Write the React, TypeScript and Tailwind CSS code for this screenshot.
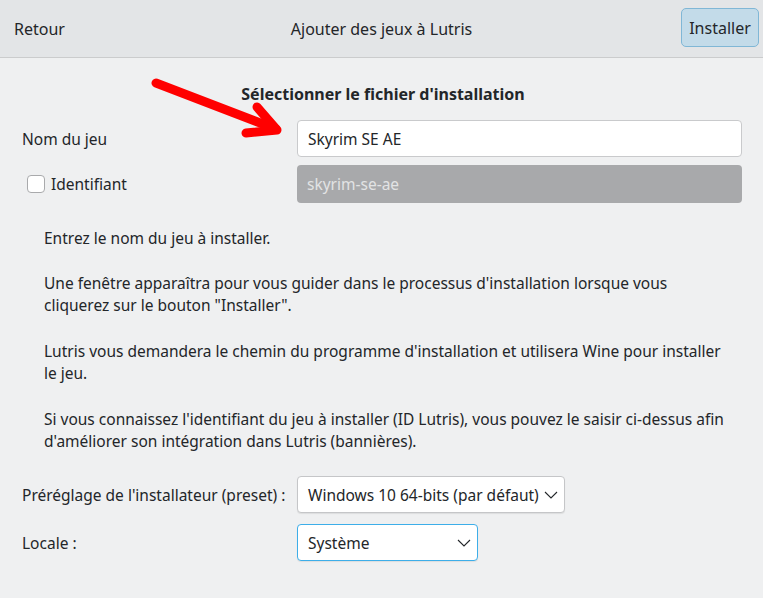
import React from "react";

const font = { fontFamily: '"Noto Sans", "Open Sans", sans-serif' };

function Chevron() {
  return (
    <svg aria-hidden="true" width="14" height="8" viewBox="0 0 14 8" fill="none">
      <path d="M1 1l6 6 6-6" stroke="#232629" strokeWidth="1.1" />
    </svg>
  );
}

function Select({ value, width, focused }: { value: string; width: string; focused?: boolean }) {
  return (
    <div
      className={`flex h-[37px] items-center justify-between rounded-[4px] border bg-white pl-[10px] pr-[6px] shadow-[0_1px_1px_rgba(0,0,0,0.08)] ${width} ${
        focused ? "border-[#3daee9]" : "border-[#c5c6c8]"
      }`}
    >
      <span className="whitespace-nowrap">{value}</span>
      <Chevron />
    </div>
  );
}

export default function App() {
  return (
    <div
      className="relative h-[598px] w-[763px] overflow-hidden bg-[#eff0f1] text-[15.5px] leading-[22px] text-[#232629]"
      style={font}
    >
      <header className="relative flex h-[58px] items-center justify-between border-b border-[#cbcccd] bg-[#e3e5e7] pl-[14px] pr-[4px] text-[16px]">
        <span>Retour</span>
        <span className="absolute left-0 right-0 text-center">Ajouter des jeux à Lutris</span>
        <button className="relative mb-[2px] h-[39px] w-[78px] rounded-[5px] border border-[#80b7d6] bg-[#c3dbe9] text-[#232629]">
          Installer
        </button>
      </header>

      <main className="pl-[22px] pr-[21px] pt-[26px]">
        <h2 className="pl-[2px] text-center text-[16px] leading-[20px] font-bold">
          Sélectionner le fichier d'installation
        </h2>

        <div className="mt-[16px] grid grid-cols-[275px_1fr] items-center gap-y-[8px]">
          <label>Nom du jeu</label>
          <div className="flex h-[37px] items-center rounded-[4px] border border-[#c9cacc] bg-white px-[10px]">
            Skyrim SE AE
          </div>

          <label className="flex items-center gap-[6px] pl-[5px]">
            <span className="h-[18px] w-[18px] rounded-[4px] border border-[#a9aaac] bg-white" />
            Identifiant
          </label>
          <div className="flex h-[38px] items-center rounded-[4px] bg-[#a8a9ab] px-[10px] text-[#e2e3e4]">
            skyrim-se-ae
          </div>
        </div>

        <div className="mt-[24px] pl-[22px]">
          <p>Entrez le nom du jeu à installer.</p>
          <p className="mt-[23px]">
            Une fenêtre apparaîtra pour vous guider dans le processus d'installation lorsque vous
            <br />
            cliquerez sur le bouton "Installer".
          </p>
          <p className="mt-[24px]">
            Lutris vous demandera le chemin du programme d'installation et utilisera Wine pour installer
            <br />
            le jeu.
          </p>
          <p className="mt-[24px]">
            Si vous connaissez l'identifiant du jeu à installer (ID Lutris), vous pouvez le saisir ci-dessus afin
            <br />
            d'améliorer son intégration dans Lutris (bannières).
          </p>
        </div>

        <div className="mt-[24px] grid grid-cols-[275px_1fr] items-center gap-y-[11px]">
          <label>Préréglage de l'installateur (preset) :</label>
          <Select value="Windows 10 64-bits (par défaut)" width="w-[268px]" />
          <label>Locale :</label>
          <Select value="Système" width="w-[181px]" focused />
        </div>
      </main>

      <svg
        aria-hidden="true"
        className="pointer-events-none absolute left-0 top-0"
        width="763"
        height="598"
      >
        <g stroke="#ff0000" strokeWidth="9" strokeLinecap="round" strokeLinejoin="round" fill="none">
          <path d="M156 83 L276 129" />
          <path d="M257 107 L277 130 L246 133" />
        </g>
      </svg>
    </div>
  );
}
